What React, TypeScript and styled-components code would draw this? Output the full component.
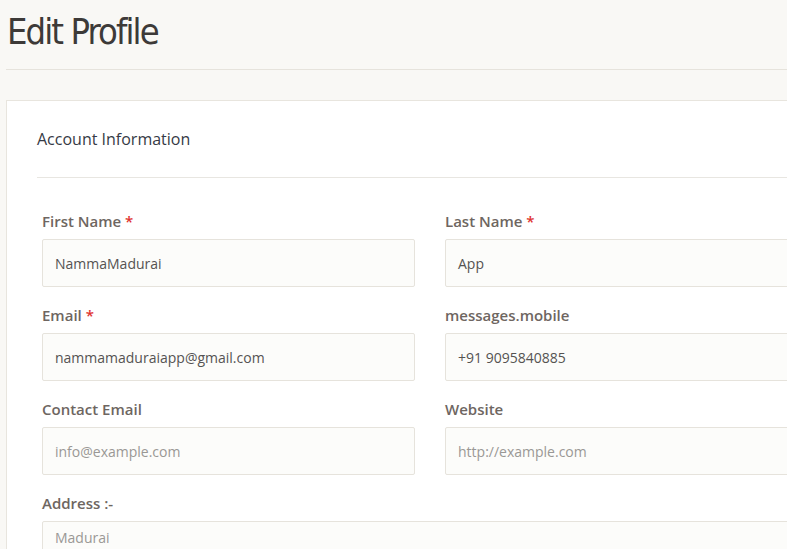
import React from "react";
import styled, { createGlobalStyle } from "styled-components";

const Global = createGlobalStyle`
  html, body { margin: 0; padding: 0; background: #f9f8f5; }
  body { font-family: "Open Sans", "Liberation Sans", sans-serif; overflow: hidden; }
  * { box-sizing: border-box; }
`;

const Page = styled.div`
  padding: 0 0 0 6px;
  width: 820px;
`;

const Header = styled.header`
  border-bottom: 1px solid #e6e3dc;
  height: 70px;
  padding: 9px 0 0 1px;
`;

const Title = styled.h1`
  margin: 0;
  font-family: "DejaVu Sans Condensed", "Lato", sans-serif;
  font-stretch: condensed;
  font-weight: 400;
  font-size: 36px;
  line-height: 46px;
  color: #3d3a38;
  letter-spacing: -1.9px;
`;

const Card = styled.section`
  margin-top: 30px;
  background: #fff;
  border: 1px solid #e8e5de;
  border-right: none;
  padding: 27px 0 0 30px;
  height: 500px;
`;

const CardTitle = styled.h2`
  margin: 0;
  font-size: 16px;
  font-weight: 400;
  line-height: 22px;
  color: #363a45;
  padding-bottom: 27px;
  border-bottom: 1px solid #e8e6e1;
`;

const Form = styled.div`
  padding: 33px 0 0 5px;
  display: grid;
  grid-template-columns: 373px 373px;
  column-gap: 30px;
  row-gap: 18px;
`;

const Field = styled.div<{ $wide?: boolean }>`
  display: flex;
  flex-direction: column;
  gap: 8px;
  grid-column: ${(p) => (p.$wide ? "1 / span 2" : "auto")};
`;

const Label = styled.label`
  font-size: 15px;
  font-weight: 600;
  line-height: 20px;
  color: #6e6661;
`;

const Star = styled.span`
  color: #e0332f;
`;

const Input = styled.div<{ $placeholder?: boolean }>`
  height: 48px;
  border: 1px solid #e6e3dc;
  border-radius: 2px;
  background: #fcfcfa;
  padding: 0 12px;
  display: flex;
  align-items: center;
  font-size: 14px;
  color: ${(p) => (p.$placeholder ? "#9a9895" : "#555352")};
`;

const TextArea = styled(Input)`
  height: 90px;
  align-items: flex-start;
  padding-top: 6px;
  line-height: 20px;
`;

type F = { label: string; value: string; req?: boolean; ph?: boolean; wide?: boolean };

const fields: F[] = [
  { label: "First Name", value: "NammaMadurai", req: true },
  { label: "Last Name", value: "App", req: true },
  { label: "Email", value: "nammamaduraiapp@gmail.com", req: true },
  { label: "messages.mobile", value: "+91 9095840885" },
  { label: "Contact Email", value: "info@example.com", ph: true },
  { label: "Website", value: "http://example.com", ph: true },
  { label: "Address :-", value: "Madurai", ph: true, wide: true },
];

export default function App() {
  return (
    <>
      <Global />
      <Page>
        <Header>
          <Title>Edit Profile</Title>
        </Header>
        <Card>
          <CardTitle>Account Information</CardTitle>
          <Form>
            {fields.map((f) => (
              <Field key={f.label} $wide={f.wide}>
                <Label>
                  {f.label}
                  {f.req && <Star> *</Star>}
                </Label>
                {f.wide ? (
                  <TextArea $placeholder={f.ph}>{f.value}</TextArea>
                ) : (
                  <Input $placeholder={f.ph}>{f.value}</Input>
                )}
              </Field>
            ))}
          </Form>
        </Card>
      </Page>
    </>
  );
}
